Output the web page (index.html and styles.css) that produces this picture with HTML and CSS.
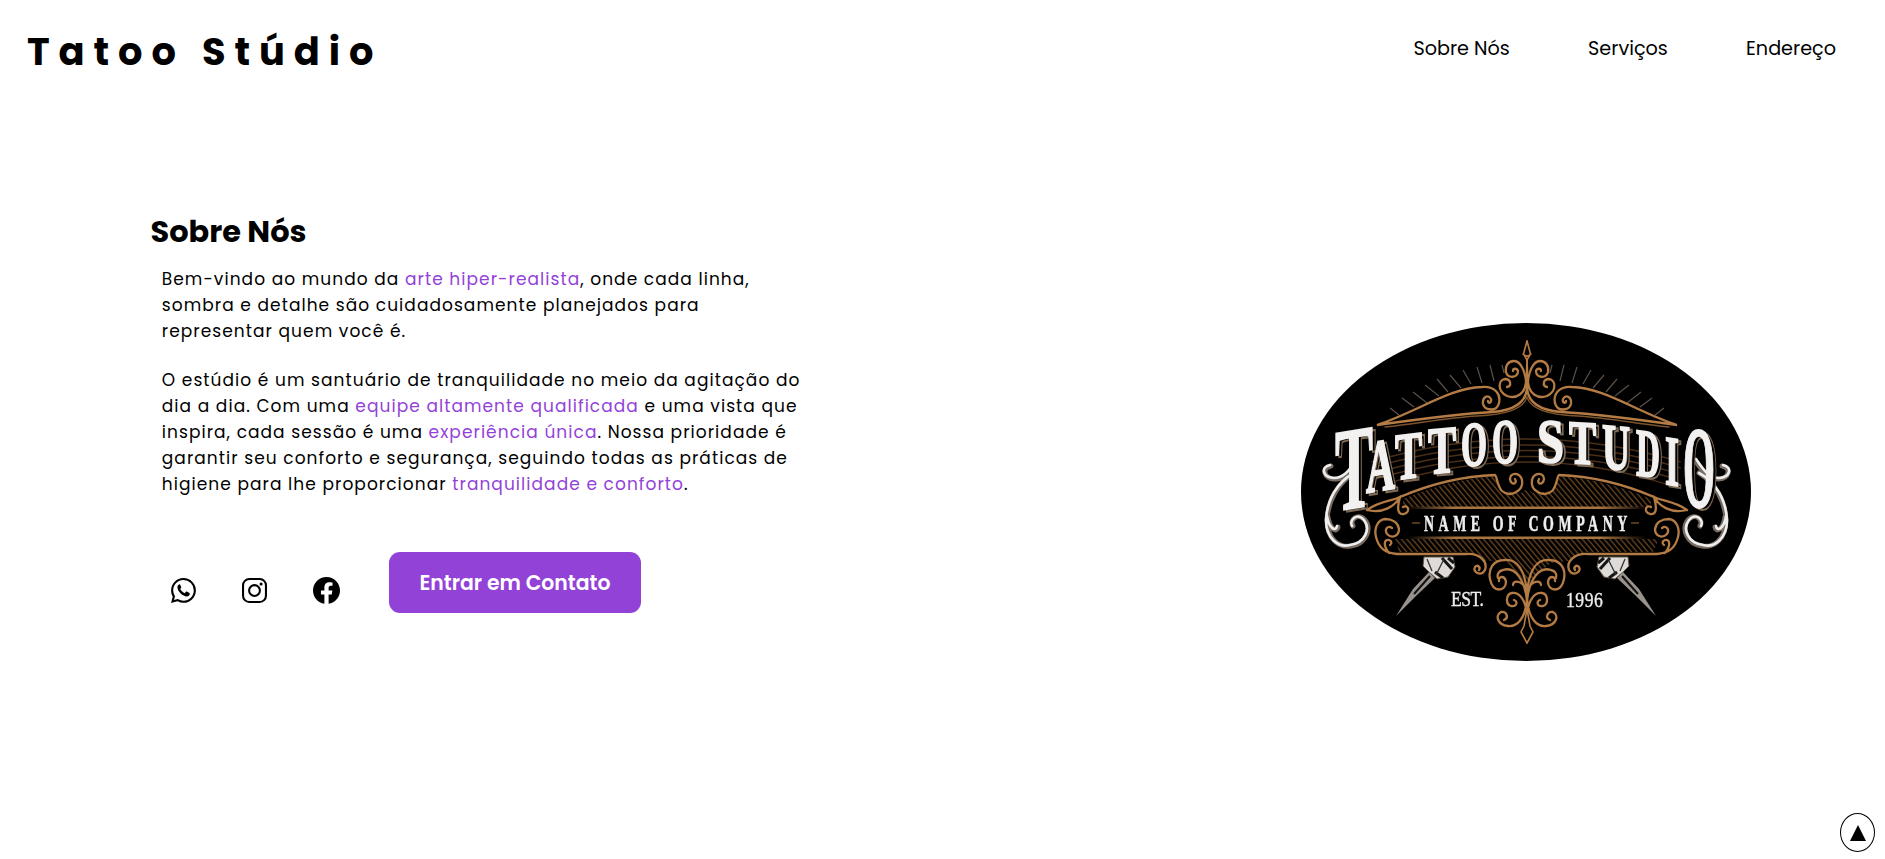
FILE: index.html
```html
<!DOCTYPE html>
<html lang="pt-BR">
<head>
<meta charset="utf-8">
<title>Tatoo Stúdio</title>
<link rel="stylesheet" href="styles.css">
</head>
<body>
<header class="header">
  <div class="brand">Tatoo Stúdio</div>
  <nav class="nav"><a>Sobre Nós</a><a>Serviços</a><a>Endereço</a></nav>
</header>
<main class="main">
  <section class="about">
    <h1 class="title">Sobre Nós</h1>
    <p class="text">Bem-vindo ao mundo da <span class="hl">arte hiper-realista</span>, onde cada linha,<br>sombra e detalhe são cuidadosamente planejados para<br>representar quem você é.</p>
    <p class="text">O estúdio é um santuário de tranquilidade no meio da agitação do<br>dia a dia. Com uma <span class="hl">equipe altamente qualificada</span> e uma vista que<br>inspira, cada sessão é uma <span class="hl">experiência única</span>. Nossa prioridade é<br>garantir seu conforto e segurança, seguindo todas as práticas de<br>higiene para lhe proporcionar <span class="hl">tranquilidade e conforto</span>.</p>
    <div class="actions">
      <div class="social">
        <svg class="icon" viewBox="0 0 16 16"><path d="M13.601 2.326A7.854 7.854 0 0 0 7.994 0C3.627 0 .068 3.558.064 7.926c0 1.399.366 2.76 1.057 3.965L0 16l4.204-1.102a7.933 7.933 0 0 0 3.79.965h.004c4.368 0 7.926-3.558 7.93-7.93A7.898 7.898 0 0 0 13.6 2.326zM7.994 14.521a6.573 6.573 0 0 1-3.356-.92l-.24-.144-2.494.654.666-2.433-.156-.251a6.56 6.56 0 0 1-1.007-3.505c0-3.626 2.957-6.584 6.591-6.584a6.56 6.56 0 0 1 4.66 1.931 6.557 6.557 0 0 1 1.928 4.66c-.004 3.639-2.961 6.592-6.592 6.592z"/><path d="M5.3 4.1c-.5.1-1.2.8-1.2 1.7 0 3 3.6 6 6 6 1 0 1.9-.7 1.9-1.6 0-.5-.1-.6-.4-.8l-1.5-.7c-.3-.1-.5 0-.7.2l-.6.8c-.9-.2-2.5-1.500-2.9-2.600l.6-.8c.1-.2.1-.4 0-.6l-.6-1.400c-.1-.2-.3-.3-.6-.2z"/></svg>
        <svg class="icon" viewBox="0 0 24 24"><rect x="1" y="1" width="22" height="22" rx="6" fill="none" stroke="#000" stroke-width="2"/><circle cx="12" cy="12" r="5.2" fill="none" stroke="#000" stroke-width="2"/><circle cx="18.300" cy="5.700" r="1.500"/></svg>
        <svg class="icon icon-fb" viewBox="2 2 20 20"><path d="M12.001 2.002c-5.522 0-9.999 4.477-9.999 9.999 0 4.99 3.656 9.126 8.437 9.879v-6.988h-2.540v-2.891h2.540V9.798c0-2.508 1.493-3.891 3.776-3.891 1.094 0 2.240.195 2.240.195v2.459h-1.264c-1.240 0-1.628.772-1.628 1.563v1.875h2.771l-.443 2.891h-2.328v6.988C18.344 21.129 22 16.992 22 12.001c0-5.522-4.477-9.999-9.999-9.999z"/></svg>
      </div>
      <a class="button">Entrar em Contato</a>
    </div>
  </section>
  <svg class="logo" viewBox="0 0 450 338">
    <defs>
      <pattern id="hatch" width="4.200" height="4.200" patternUnits="userSpaceOnUse" patternTransform="rotate(-40)"><path d="M1 0V5" stroke="#6a4420" stroke-width="1.300"/></pattern>
      <linearGradient id="bar"><stop offset="0" stop-color="#a87540" stop-opacity="0"/><stop offset=".2" stop-color="#a87540"/><stop offset=".8" stop-color="#a87540"/><stop offset="1" stop-color="#a87540" stop-opacity="0"/></linearGradient>
      <clipPath id="oval"><ellipse cx="225" cy="169" rx="225" ry="169"/></clipPath>
      <g id="rays" stroke="#5a5048" stroke-width="1.200" fill="none">
        <path d="M89 85L98 92M101 75L113 84M112 69L126 80M124 62L138 73M136 56L147 69M149 52L160 65M162 47L170 61M176 44L181 60M189 42L193 58M201 42L203 50"/>
      </g>
      <g id="scrolls" fill="none" stroke="#b47c44" stroke-width="2.300" stroke-linecap="round">
        <path d="M226 18L222.500 31L226 37L225 62M222 31C224 33 226 33 226 33" stroke-width="1.600"/>
        <path d="M226 66C225 49 220 38 213 38C207 38 204 43 205 49C207 56 217 55 217 48C216 45 212 45 212 48"/>
        <path d="M225 55C226 72 214 76 206 73C196 68 197 57 204 56C210 56 211 63 206 64"/>
        <path d="M226 66C224 83 206 88 191 89C155 91 119 96 76 102C116 89 148 65 181 64C194 63 200 71 198 80C196 89 184 88 182 81C181 74 187 71 190 76C191 80 187 81 187 78"/>
        <path d="M226 74C222 88 200 92 176 93C142 95 116 101 84 104" stroke="#7d532c" stroke-width="1.400"/>
        <path d="M99 174C134 159 166 153 194 152C196 153 196 163 201 168C209 175 223 168 221 157C219 149 209 149 209 156C210 163 217 161 214 156"/>
        <path d="M66 187C79 178 88 179 99 174C94 183 82 191 66 187M99 174C95 188 98 192 103 191C110 189 107 181 102 184"/>
        <path d="M98 206C97 199 91 196 84 196C76 197 73 206 75 214C78 226 85 230 96 231L165 231C179 230 187 239 184 247C180 254 171 249 174 244C176 241 180 244 178 247M98 206C98 213 91 216 86 211C83 206 87 202 91 205M88 230C81 221 84 216 88 217C91 218 91 221 89 222"/>
        <path d="M226 270C224 247 216 236 204 237C192 237 187 246 189 256C192 271 205 268 205 259C204 252 197 253 198 258M226 278C224 257 214 243 202 247C197 248 196 252 197 255M226 273C225 257 212 256 212 262"/>
        <path d="M226 290C224 276 218 269 211 270C205 271 204 281 210 283C216 284 217 278 213 277M226 277C224 296 216 304 207 303C196 302 194 292 200 289C206 288 208 295 203 297"/>
        <path d="M226 286L223 303L220 309L226 320" stroke-width="1.600"/>
      </g>
      <g id="machine">
        <path d="M123 234L152 234L154 244L147 254L136 256L128 249L122 243Z" fill="#dedbd9" stroke="#655848"/>
        <path d="M141 235L151 246M134 249L142 255M147 235L153 240" stroke="#151515" stroke-width="3"/>
        <path d="M143 236L135 252M126 236L131 248" stroke="#333" stroke-width="1.300"/>
        <path d="M128 249L134 255L116 272L95 293L112 266Z" fill="#99928c"/><path d="M129 253L113 271" stroke="#111" stroke-width="2"/>
      </g>
      <g id="swash" fill="none" stroke-linecap="round">
        <path d="M30 143C20 145 23 155 33 156C45 157 51 145 57 137M53 150C37 160 27 177 26 197C26 217 39 225 50 223C65 221 71 206 64 197C57 189 48 197 52 203M27 194C29 207 36 210 37 204" stroke="#796c62" stroke-width="5"/>
        <path d="M29 142C19 144 22 154 32 155C44 156 50 144 56 136M53 150C36 159 26 177 25 197C25 216 38 225 49 222C64 220 70 206 63 197C56 189 48 197 51 203M26 193C28 206 35 209 36 203" stroke="#eee" stroke-width="2.600"/>
      </g>
      <g id="lettering" font-family="Liberation Serif, serif" font-weight="700">
        <text transform="translate(34 188) skewY(-9)" font-size="118" textLength="38" lengthAdjust="spacingAndGlyphs">T</text>
        <text transform="translate(65 170) skewY(-9)" font-size="75" textLength="29" lengthAdjust="spacingAndGlyphs">A</text>
        <text transform="translate(94 157) skewY(-7)" font-size="67" textLength="27" lengthAdjust="spacingAndGlyphs">T</text>
        <text transform="translate(127 151) skewY(-5)" font-size="67" textLength="28" lengthAdjust="spacingAndGlyphs">T</text>
        <text transform="translate(160 143) skewY(-3)" font-size="63" textLength="26" lengthAdjust="spacingAndGlyphs">O</text>
        <text transform="translate(191 140) skewY(-1)" font-size="63" textLength="26" lengthAdjust="spacingAndGlyphs">O</text>
        <text transform="translate(236 139) skewY(1)" font-size="62" textLength="27" lengthAdjust="spacingAndGlyphs">S</text>
        <text transform="translate(268 140) skewY(3)" font-size="62" textLength="27" lengthAdjust="spacingAndGlyphs">T</text>
        <text transform="translate(301 145) skewY(5)" font-size="65" textLength="28" lengthAdjust="spacingAndGlyphs">U</text>
        <text transform="translate(335 152) skewY(7)" font-size="68" textLength="24" lengthAdjust="spacingAndGlyphs">D</text>
        <text transform="translate(364 161) skewY(9)" font-size="71" textLength="14" lengthAdjust="spacingAndGlyphs">I</text>
        <text transform="translate(382 183) skewY(3)" font-size="116" textLength="32" lengthAdjust="spacingAndGlyphs">O</text>
      </g>
    </defs>
    <ellipse cx="225" cy="169" rx="225" ry="169"/>
    <g class="artwork" clip-path="url(#oval)">
      <use href="#rays"/><use href="#rays" transform="translate(452 0) scale(-1 1)"/>
      <path d="M70 139Q225 93 380 139M70 145Q225 99 380 145M75 150Q225 105 375 150M75 156Q225 111 375 156M85 161Q225 117 365 161" fill="none" stroke="#4a2f18" stroke-width="1.300"/>
      <path d="M102 176Q150 156 194 153L201 168L220 170L226 166L232 170L251 168L258 153Q302 156 350 176L350 184H102ZM94 216H358L352 229H285L268 238L250 240L226 260L204 238L185 238L167 229H98Z" fill="url(#hatch)"/>
      <path d="M106 183.500H346V186H106ZM106 213.500H346V216H106Z" fill="url(#bar)"/>
      <path d="M111 200H119M330 200H338" stroke="#6a4928" stroke-width="1.500"/>
      <use href="#machine"/><use href="#machine" transform="translate(450 0) scale(-1 1)"/>
      <use href="#scrolls"/><use href="#scrolls" transform="translate(452 0) scale(-1 1)"/>
      <use href="#swash"/><use href="#swash" transform="translate(451 0) scale(-1 1)"/>
      <use href="#lettering" x="3" y="2" fill="#000" stroke="#7d6853" stroke-width="2.200"/>
      <use href="#lettering" fill="#f3f1f0" stroke="#f3f1f0" stroke-width="1.900"/>
      <g font-family="Liberation Serif, serif" font-weight="700" fill="#eee">
        <text transform="translate(123 208) scale(.62 1)" font-size="22.500" textLength="328" stroke="#eee" stroke-width=".5">NAME OF COMPANY</text>
        <text transform="translate(150 283) scale(.8 1)" font-size="22" font-weight="400" stroke="#eee" stroke-width=".4" textLength="41">EST.</text>
        <text transform="translate(265 284) scale(.8 1)" font-size="22" font-weight="400" stroke="#eee" stroke-width=".4" textLength="46">1996</text>
      </g>
    </g>
  </svg>
</main>
<a class="to-top"><svg viewBox="0 0 16 16"><path d="M8 0L16 16H0Z"/></svg></a>
</body>
</html>
```
FILE: styles.css
```css
body {
  margin: 0;
  height: 859px;
  overflow: hidden;
  background: #fff;
  color: #000;
  font-family: Poppins, Inter, sans-serif;
}
.header {
  display: flex;
  justify-content: space-between;
  align-items: flex-start;
  height: 90px;
  box-sizing: border-box;
  padding: 24px 49px 0 27px;
}
.brand { font-size: 38.4px; line-height: 56px; font-weight: 700; letter-spacing: 8.92px; }
.nav { display: flex; gap: 78.2px; padding-top: 10px; font-size: 19.2px; line-height: 30px; }
.main {
  display: flex;
  justify-content: space-between;
  align-items: flex-start;
  padding: 118px 134px 0 150.5px;
}
.title { margin: 0 0 12px; font-size: 30.4px; line-height: 47px; height: 46px; font-weight: 700; }
.text { margin: 0 0 23px 11.3px; font-size: 17px; line-height: 26px; letter-spacing: 1.055px; white-space: nowrap; }
.hl { color: #9342d8; }
.actions { display: flex; align-items: flex-start; gap: 49px; margin-top: 55px; padding-left: 20.5px; }
.social { display: flex; align-items: center; gap: 46px; padding-top: 25px; }
.icon { width: 25px; height: 25px; }
.icon-fb { width: 27px; height: 27px; }
.button {
  width: 252px;
  height: 61px;
  border-radius: 11px;
  background: #9342d8;
  color: #fff;
  font-size: 20.4px;
  line-height: 62px;
  font-weight: 600;
  text-align: center;
}
.logo { width: 450px; height: 338px; margin-top: 115px; }
.artwork { filter: blur(.4px); }
.to-top {
  position: fixed;
  right: 10px;
  bottom: 7px;
  display: flex;
  align-items: center;
  justify-content: center;
  width: 35px;
  height: 39px;
  box-sizing: border-box;
  border: 1px solid #000;
  border-radius: 50%;
}
.to-top svg { width: 16px; height: 16px; }
```
